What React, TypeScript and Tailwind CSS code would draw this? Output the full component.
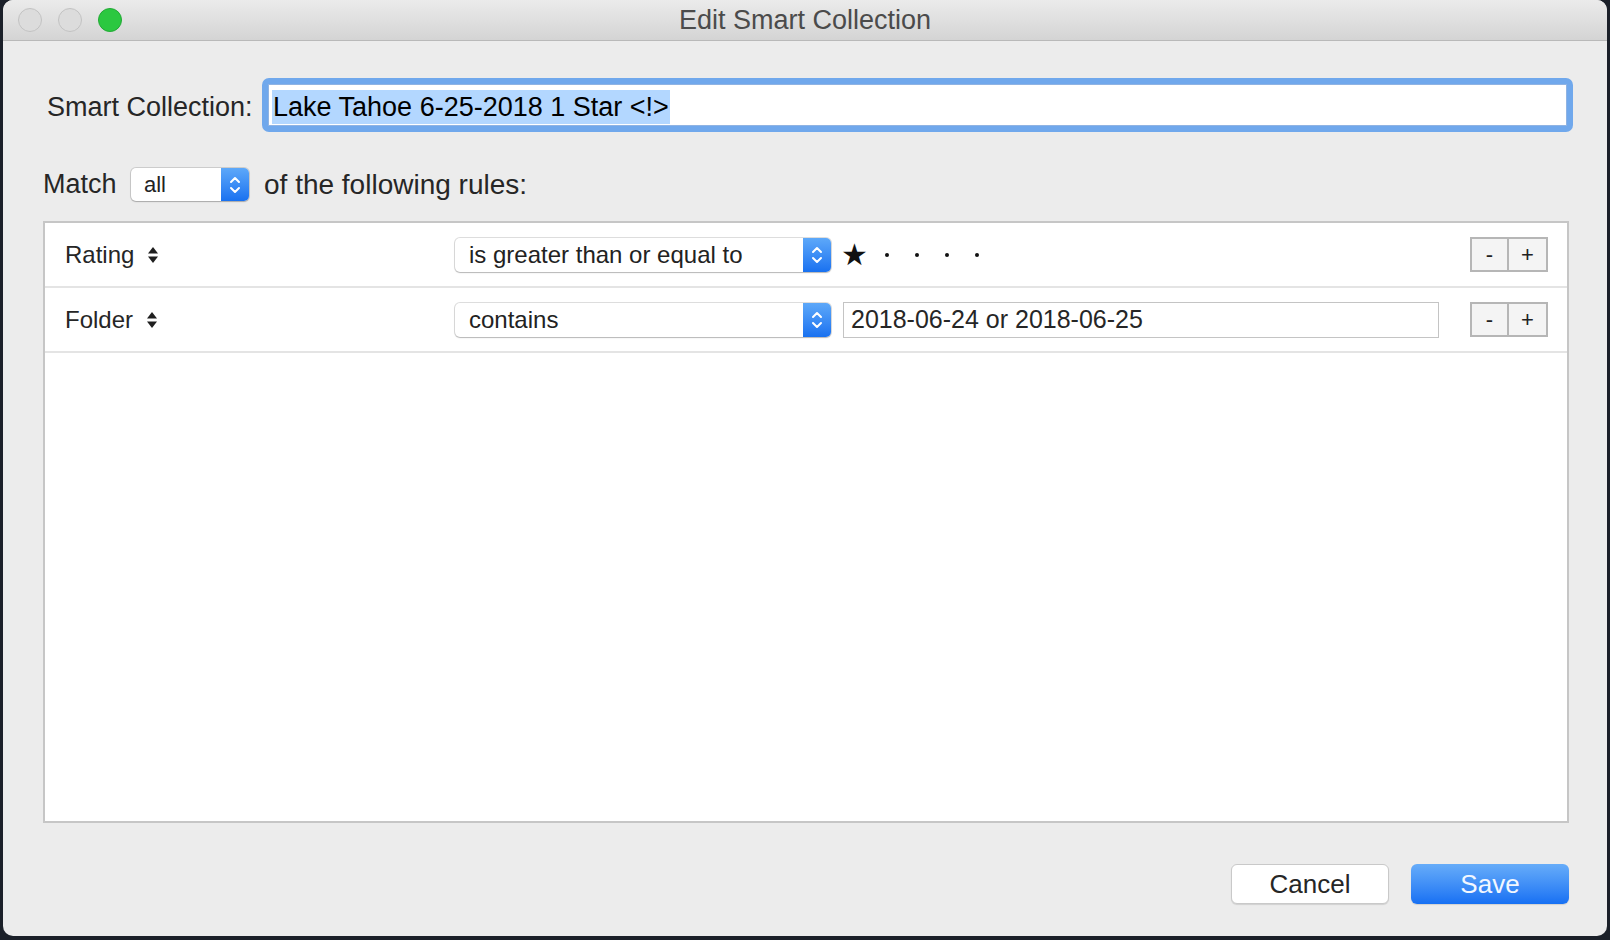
import type { ReactNode } from 'react'

// macOS "Edit Smart Collection" sheet

function TrafficLight({ color }: { color: 'gray' | 'green' }) {
  return (
    <div
      className={
        color === 'green'
          ? 'h-[24px] w-[24px] rounded-full bg-[#2bc840] border border-[#22a935]'
          : 'h-[24px] w-[24px] rounded-full bg-[#dcdcdc] border border-[#c2c2c2]'
      }
    />
  )
}

function Chevrons() {
  return (
    <svg width="14" height="22" viewBox="0 0 14 22" fill="none">
      <path d="M3 8 L7 4 L11 8" stroke="white" strokeWidth="2" strokeLinecap="round" strokeLinejoin="round" />
      <path d="M3 14 L7 18 L11 14" stroke="white" strokeWidth="2" strokeLinecap="round" strokeLinejoin="round" />
    </svg>
  )
}

function UpDown() {
  return (
    <svg width="12" height="18" viewBox="0 0 12 18" fill="#1f1f1f">
      <path d="M6 1 L11 7.5 L1 7.5 Z" />
      <path d="M6 17 L11 10.5 L1 10.5 Z" />
    </svg>
  )
}

function Popup({ label, className, textClass }: { label: string; className: string; textClass: string }) {
  return (
    <div
      className={
        'flex items-stretch rounded-[5px] bg-white shadow-[0_0_0_1px_rgba(0,0,0,0.13),0_1px_1.5px_rgba(0,0,0,0.18)] ' +
        className
      }
    >
      <div className={'flex flex-1 items-center text-[#222] ' + textClass}>{label}</div>
      <div className="flex w-[28px] items-center justify-center rounded-r-[5px] bg-gradient-to-b from-[#5da8f9] to-[#1871f0]">
        <Chevrons />
      </div>
    </div>
  )
}

function PlusMinus() {
  return (
    <div className="flex h-[35px] border-2 border-[#b6b6b6] bg-[#f4f4f4] text-[22px] leading-none text-[#222]">
      <div className="flex w-[37px] items-center justify-center border-r-2 border-[#b6b6b6]">-</div>
      <div className="flex w-[37px] items-center justify-center">+</div>
    </div>
  )
}

function RuleRow({ label, children }: { label: string; children: ReactNode }) {
  return (
    <div className="flex h-[65px] items-center border-b-2 border-[#e4e4e4] pl-[20px] pr-[19px]">
      <div className="flex w-[390px] items-center gap-[13px] text-[24px] text-[#262626]">
        <span>{label}</span>
        <UpDown />
      </div>
      {children}
      <div className="ml-auto">
        <PlusMinus />
      </div>
    </div>
  )
}

function Dot() {
  return <div className="h-[4px] w-[4px] rounded-full bg-[#111]" />
}

export default function App() {
  return (
    <div
      className="h-[940px] w-[1610px] overflow-hidden bg-[#1b2029]"
      style={{ fontFamily: '"Liberation Sans", Arial, sans-serif' }}
    >
      <div className="ml-[3px] flex h-[936px] w-[1604px] flex-col overflow-hidden rounded-[10px] bg-[#ececec]">
        {/* Title bar */}
        <div className="relative flex h-[41px] shrink-0 items-center gap-[16px] border-b border-[#b9b9b9] bg-gradient-to-b from-[#ebebeb] to-[#d4d4d4] pl-[15px]">
          <TrafficLight color="gray" />
          <TrafficLight color="gray" />
          <TrafficLight color="green" />
          <div className="absolute inset-0 flex items-center justify-center text-[27px] text-[#4b4b4b]">
            Edit Smart Collection
          </div>
        </div>

        <div className="flex flex-1 flex-col pl-[40px] pr-[38px]">
          {/* Name */}
          <div className="-mr-[4px] mt-[37px] flex items-center">
            <div className="w-[219px] pl-[4px] pt-[4px] text-[27px] text-[#262626]">Smart Collection:</div>
            <div className="flex-1 rounded-[7px] bg-[#70a8ec] p-[6px]">
              <div className="flex h-[42px] items-center border border-[#8fb3e3] bg-white pl-[3px] pt-[3px]">
                <span className="bg-[#b3d7ff] px-[1px] text-[27px] leading-[34px] text-black">
                  Lake Tahoe 6-25-2018 1 Star &lt;!&gt;
                </span>
              </div>
            </div>
          </div>

          {/* Match */}
          <div className="mt-[36px] flex h-[33px] items-center">
            <div className="w-[88px] text-[27px] text-[#262626]">Match</div>
            <Popup label="all" className="h-[33px] w-[118px]" textClass="pl-[13px] text-[22px]" />
            <div className="ml-[15px] text-[28px] text-[#262626]">of the following rules:</div>
          </div>

          {/* Rules */}
          <div className="mt-[20px] h-[602px] border-2 border-[#c6c6c6] bg-white">
            <RuleRow label="Rating">
              <Popup label="is greater than or equal to" className="h-[34px] w-[376px]" textClass="pl-[14px] text-[24px]" />
              <div className="ml-[10px] flex items-center">
                <span className="text-[30px] leading-none text-[#111]">★</span>
                <div className="ml-[17px] flex items-center gap-[26px]">
                  <Dot />
                  <Dot />
                  <Dot />
                  <Dot />
                </div>
              </div>
            </RuleRow>
            <RuleRow label="Folder">
              <Popup label="contains" className="h-[34px] w-[376px]" textClass="pl-[14px] text-[24px]" />
              <div className="ml-[12px] flex h-[36px] w-[596px] items-center border border-[#c4c4c4] bg-white pl-[7px] text-[25px] text-[#262626]">
                2018-06-24 or 2018-06-25
              </div>
            </RuleRow>
          </div>

          {/* Buttons */}
          <div className="mt-[41px] flex justify-end gap-[22px]">
            <button className="h-[40px] w-[158px] rounded-[6px] border border-[#c9c9c9] bg-white text-[26px] text-[#262626] shadow-[0_1px_1px_rgba(0,0,0,0.12)]">
              Cancel
            </button>
            <button className="h-[40px] w-[158px] rounded-[6px] bg-gradient-to-b from-[#66acf9] to-[#1670f3] text-[26px] text-[#f2f7ff] shadow-[0_1px_1px_rgba(0,0,0,0.12)]">
              Save
            </button>
          </div>
        </div>
      </div>
    </div>
  )
}
